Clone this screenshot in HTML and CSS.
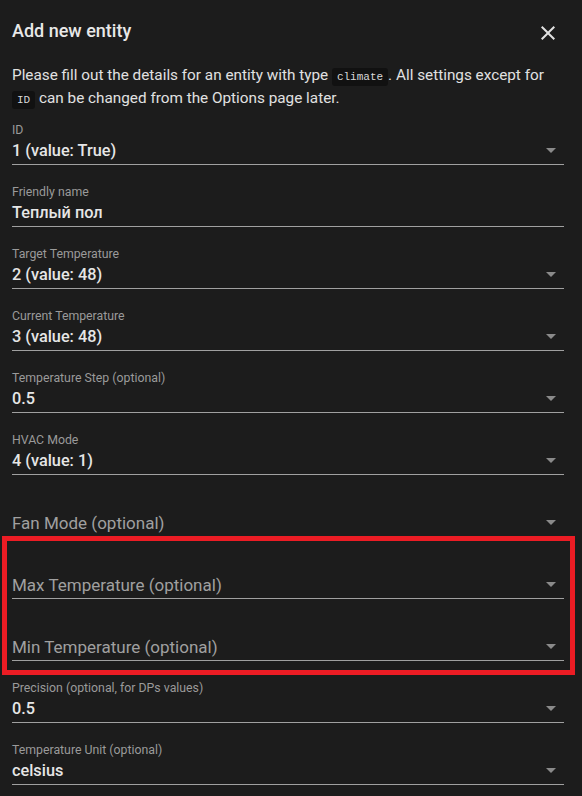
FILE: index.html
```html
<!DOCTYPE html>
<html>
<head>
<meta charset="utf-8">
<link rel="stylesheet" href="styles.css">
</head>
<body>
<div class="dialog">
  <div class="header">
    <h2 class="title">Add new entity</h2>
    <svg class="close" width="24" height="24" viewBox="0 0 24 24"><path d="M19 6.41 17.59 5 12 10.59 6.41 5 5 6.41 10.59 12 5 17.59 6.41 19 12 13.41 17.59 19 19 17.59 13.41 12z" fill="#e1e1e1"/></svg>
  </div>
  <p class="desc">Please fill out the details for an entity with type <code class="chip">climate</code>. All settings except for <code class="chip">ID</code> can be changed from the Options page later.</p>
  <div class="fields">
    <div class="field"><div class="label">ID</div><div class="value">1 (value: True)</div><span class="arrow"></span></div>
    <div class="field"><div class="label">Friendly name</div><div class="value">Теплый пол</div></div>
    <div class="field"><div class="label">Target Temperature</div><div class="value">2 (value: 48)</div><span class="arrow"></span></div>
    <div class="field"><div class="label">Current Temperature</div><div class="value">3 (value: 48)</div><span class="arrow"></span></div>
    <div class="field"><div class="label">Temperature Step (optional)</div><div class="value">0.5</div><span class="arrow"></span></div>
    <div class="field"><div class="label">HVAC Mode</div><div class="value">4 (value: 1)</div><span class="arrow"></span></div>
    <div class="field empty"><div class="label"></div><div class="value placeholder">Fan Mode (optional)</div><span class="arrow"></span></div>
    <div class="field empty"><div class="label"></div><div class="value placeholder">Max Temperature (optional)</div><span class="arrow"></span></div>
    <div class="field empty"><div class="label"></div><div class="value placeholder">Min Temperature (optional)</div><span class="arrow"></span></div>
    <div class="field"><div class="label">Precision (optional, for DPs values)</div><div class="value">0.5</div><span class="arrow"></span></div>
    <div class="field"><div class="label">Temperature Unit (optional)</div><div class="value">celsius</div><span class="arrow"></span></div>
  </div>
  <div class="highlight"></div>
</div>
</body>
</html>
```

FILE: styles.css
```css
html, body {
  margin: 0;
  padding: 0;
  background: #1c1c1c;
  overflow: hidden;
}
body {
  font-family: Roboto, "Noto Sans", sans-serif;
  color: #e1e1e1;
}
.dialog {
  position: relative;
  width: 582px;
  height: 796px;
  padding: 0 18px 0 12px;
  box-sizing: border-box;
}
.header {
  display: flex;
  align-items: center;
  justify-content: space-between;
  height: 64px;
  padding-bottom: 2px;
  box-sizing: border-box;
}
.title {
  margin: 0;
  font-size: 18px;
  font-weight: 500;
  color: #e8e8e8;
  line-height: 24px;
}
.close {
  margin-right: 4px;
  margin-top: 4px;
}
.desc {
  margin: 0;
  padding-right: 10px;
  font-size: 15.3px;
  line-height: 23px;
  color: #e1e1e1;
}
.chip {
  font-family: "Liberation Mono", "DejaVu Sans Mono", monospace;
  font-size: 11px;
  line-height: 1;
  background: #111111;
  color: #d8d8d8;
  padding: 3px 5px;
  border-radius: 3px;
}
.fields {
  display: flex;
  flex-direction: column;
  margin-top: -7px;
}
.field {
  position: relative;
  height: 61px;
  border-bottom: 1px solid #a0a0a0;
  display: flex;
  flex-direction: column;
}
.label {
  margin-top: 19px;
  height: 16px;
  font-size: 12.3px;
  line-height: 16px;
  color: #9a9a9a;
}
.value {
  margin-top: 1px;
  height: 24px;
  font-size: 16.3px;
  line-height: 24px;
  font-weight: 500;
  color: #e6e6e6;
}
.placeholder {
  font-weight: 400;
  font-size: 17px;
  color: #a0a0a0;
}
.arrow {
  position: absolute;
  right: 8px;
  top: 45px;
  width: 0;
  height: 0;
  border-left: 5px solid transparent;
  border-right: 5px solid transparent;
  border-top: 5px solid #8a8a8a;
}
.highlight {
  position: absolute;
  left: 2px;
  top: 536px;
  width: 573px;
  height: 139px;
  border: 5px solid #ec1c24;
  box-sizing: border-box;
  pointer-events: none;
}
```
